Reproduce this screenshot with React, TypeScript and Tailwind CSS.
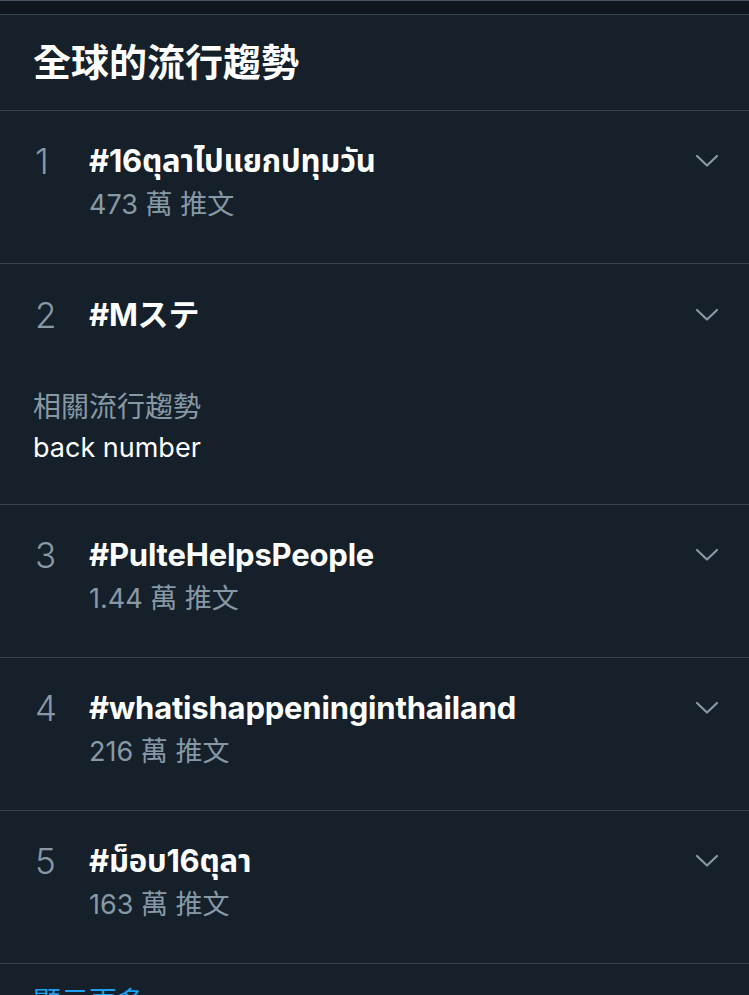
import React from "react";

const font = {
  fontFamily:
    'Inter, "Noto Sans", "Noto Sans Thai", "Noto Sans CJK TC", "Noto Sans CJK JP", sans-serif',
};

type Trend = {
  rank: number;
  tag: string;
  count?: string;
  related?: string;
};

const trends: Trend[] = [
  { rank: 1, tag: "#16ตุลาไปแยกปทุมวัน", count: "473 萬 推文" },
  { rank: 2, tag: "#Mステ", related: "back number" },
  { rank: 3, tag: "#PulteHelpsPeople", count: "1.44 萬 推文" },
  { rank: 4, tag: "#whatishappeninginthailand", count: "216 萬 推文" },
  { rank: 5, tag: "#ม็อบ16ตุลา", count: "163 萬 推文" },
];

function Chevron() {
  return (
    <svg width="24" height="14" viewBox="0 0 24 14" className="shrink-0">
      <polyline
        points="2,2 12,11.5 22,2"
        fill="none"
        stroke="#8899a6"
        strokeWidth="2.2"
        strokeLinecap="round"
        strokeLinejoin="round"
      />
    </svg>
  );
}

function TrendRow({ item }: { item: Trend }) {
  return (
    <div
      className={`border-b border-[#38444d] pl-[33px] pr-[30px] ${
        item.related ? "pt-[33px] pb-[38px]" : "pt-[32px] pb-[40px]"
      }`}
    >
      <div className="flex items-center h-[36px]">
        <span className="w-[56px] pl-[2px] text-[35px] leading-[36px] font-light text-[#8899a6]">
          {item.rank}
        </span>
        <span className="flex-1 text-[31px] leading-[36px] font-bold text-white tracking-[-0.2px]">
          {item.tag}
        </span>
        <Chevron />
      </div>
      {item.count && (
        <div className="mt-[8px] pl-[56px] text-[27px] leading-[36px] text-[#8899a6]">
          {item.count}
        </div>
      )}
      {item.related && (
        <div className="mt-[56px]">
          <div className="text-[28px] leading-[36px] text-[#8899a6]">相關流行趨勢</div>
          <div className="mt-[5px] text-[27px] leading-[36px] text-white">
            {item.related}
          </div>
        </div>
      )}
    </div>
  );
}

export default function App() {
  return (
    <div className="w-[749px] h-[995px] overflow-hidden bg-[#15202b]" style={font}>
      <div className="h-[15px] bg-[#10171e] border-t border-b border-t-[#4a5663] border-b-[#38444d]" />
      <div className="pt-[25px] pb-[26px] pl-[33px] border-b border-[#38444d]">
        <h1 className="text-[38px] leading-[44px] font-bold text-white">全球的流行趨勢</h1>
      </div>
      {trends.map((t) => (
        <TrendRow key={t.rank} item={t} />
      ))}
      <div className="pt-[20px] pl-[33px] text-[28px] leading-[36px] text-[#1da1f2]">
        顯示更多
      </div>
    </div>
  );
}
